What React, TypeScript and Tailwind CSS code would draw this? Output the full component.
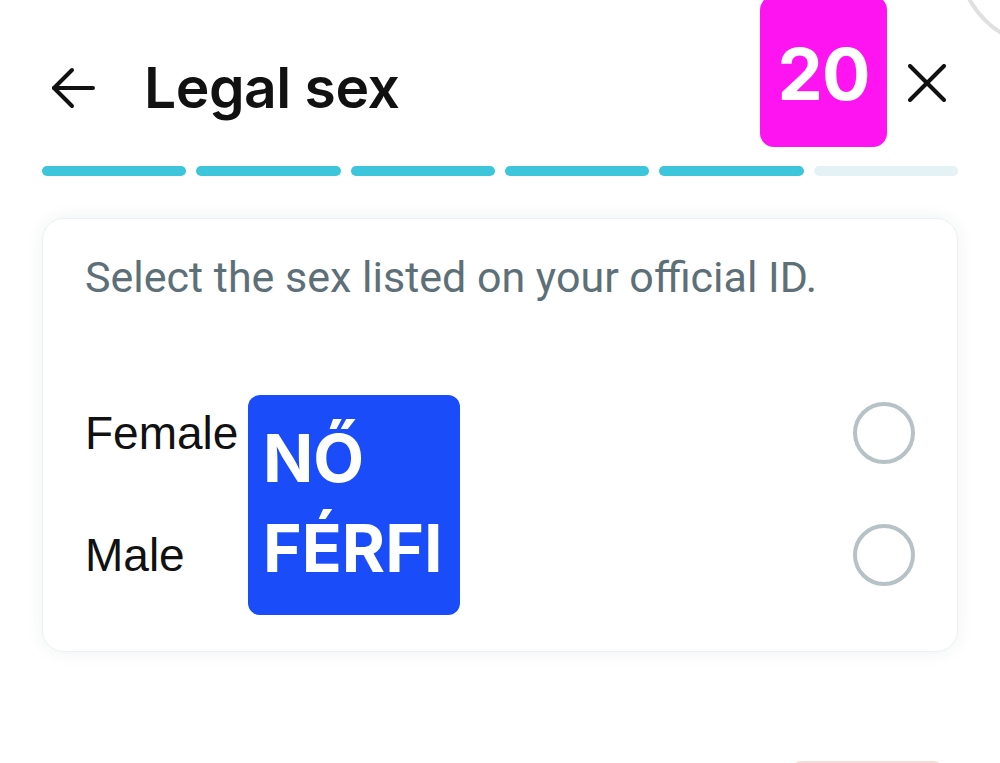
const steps = [true, true, true, true, true, false];

function BackArrow() {
  return (
    <svg width="46" height="44" viewBox="0 0 46 44" fill="none" stroke="#111" strokeWidth="4" strokeLinecap="round" strokeLinejoin="round">
      <path d="M43 22H4" />
      <path d="M22 4L4 22L22 40" />
    </svg>
  );
}

function CloseIcon() {
  return (
    <svg width="38" height="38" viewBox="0 0 38 38" fill="none" stroke="#111" strokeWidth="4" strokeLinecap="round">
      <path d="M2 2L36 36" />
      <path d="M36 2L2 36" />
    </svg>
  );
}

function Option({ label }: { label: string }) {
  return (
    <div className="flex h-[122px] items-center justify-between">
      <span className="font-['Liberation_Sans',Arial,sans-serif] text-[46px] leading-none text-[#111]">{label}</span>
      <span className="h-[62px] w-[62px] rounded-full border-[4px] border-[#b7c2c6] bg-white" />
    </div>
  );
}

export default function App() {
  return (
    <div className="relative flex h-[763px] w-[1000px] flex-col overflow-hidden bg-white font-['Inter',sans-serif]">
      {/* decorative arc, top right */}
      <div className="absolute left-[956px] top-[-139px] h-[188px] w-[188px] rounded-full border-[4px] border-[#e0e0e0]" />

      {/* header */}
      <div className="flex h-[147px] shrink-0 items-start">
        <div className="ml-[50px] mt-[59px] flex items-center">
          <BackArrow />
          <h1 className="ml-[48px] text-[57px] font-semibold leading-none tracking-[-0.5px] text-[#111]">Legal sex</h1>
        </div>
        <div className="ml-auto mr-[54px] mt-[64px]">
          <CloseIcon />
        </div>
      </div>

      {/* counter sticker */}
      <div className="absolute left-[760px] top-[-4px] flex h-[151px] w-[127px] items-center justify-center rounded-[14px] bg-[#fd14f0] pt-[4px]">
        <span className="text-[72px] font-bold leading-none tracking-[-1px] text-white">20</span>
      </div>

      {/* progress */}
      <div className="mx-[42px] mt-[19px] flex shrink-0 gap-[10px]">
        {steps.map((done, i) => (
          <div key={i} className={done ? "h-[10px] flex-1 rounded-full bg-[#3cc5db]" : "h-[10px] flex-1 rounded-full bg-[#e4f2f6]"} />
        ))}
      </div>

      {/* card */}
      <div className="relative mx-[42px] mt-[42px] h-[434px] shrink-0 rounded-[22px] border border-[#eef1f3] bg-white px-[42px] pt-[33px] shadow-[0_0_18px_rgba(30,50,70,0.07)]">
        <p className="font-['Roboto',sans-serif] text-[43px] leading-[50px] text-[#5d6f77]">Select the sex listed on your official ID.</p>
        <div className="mt-[70px]">
          <Option label="Female" />
          <Option label="Male" />
        </div>

        {/* translation sticker */}
        <div className="absolute left-[205px] top-[176px] h-[220px] w-[212px] rounded-[12px] bg-[#1b4cf9] pl-[15px] pt-[18px]">
          <div className="text-[66px] font-bold leading-[90px] text-white">NŐ</div>
          <div className="text-[66px] font-bold leading-[90px] text-white">FÉRFI</div>
        </div>
      </div>

      {/* bottom button edge */}
      <div className="mt-[109px] flex shrink-0 justify-end pr-[55px]">
        <div className="h-[48px] w-[155px] rounded-t-[12px] bg-[#f6dcd7]" />
      </div>
    </div>
  );
}
